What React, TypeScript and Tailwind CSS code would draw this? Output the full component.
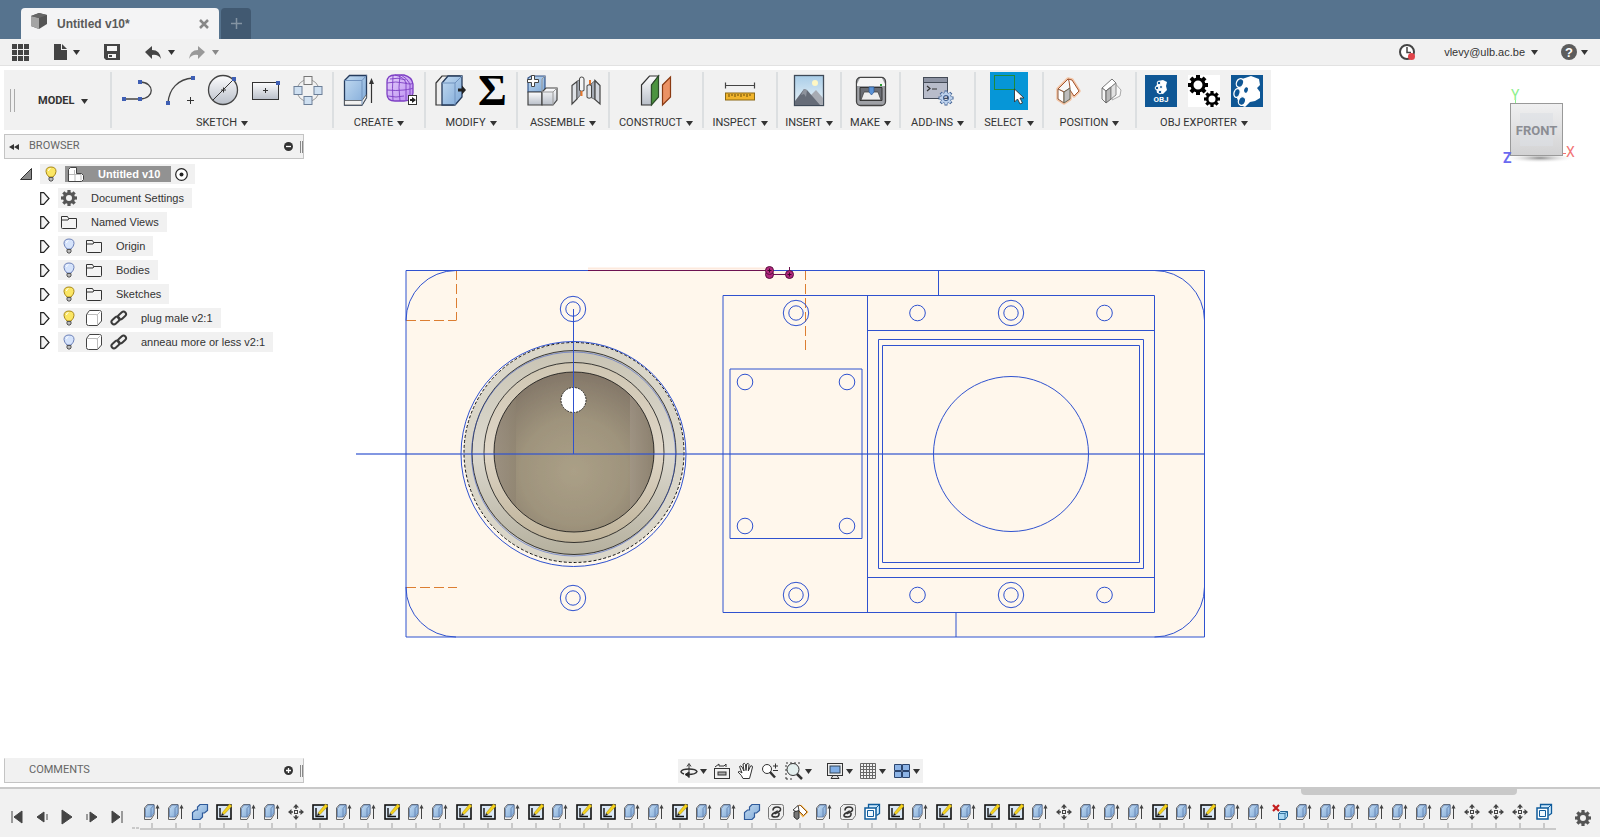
import type { ReactNode } from "react";

const Caret = ({ className = "text-[#333]" }: { className?: string }) => (
  <svg width="7" height="5" viewBox="0 0 7 5" className={`shrink-0 ${className}`} aria-hidden="true">
    <path d="M0 0h7L3.5 5z" fill="currentColor" />
  </svg>
);

const Gear = ({ cx, cy, r, hole, teeth = 8, fill }: { cx: number; cy: number; r: number; hole: number; teeth?: number; fill: string }) => (
  <g>
    {Array.from({ length: teeth }, (_, i) => (
      <rect
        key={i}
        x={cx - r * 0.2}
        y={cy - r}
        width={r * 0.4}
        height={r * 0.5}
        fill={fill}
        transform={`rotate(${(360 / teeth) * i} ${cx} ${cy})`}
      />
    ))}
    <circle cx={cx} cy={cy} r={(r * 0.76 + hole) / 2} fill="none" stroke={fill} strokeWidth={r * 0.76 - hole} />
  </g>
);

const Gradients = () => (
  <svg width="0" height="0" className="absolute" aria-hidden="true">
    <defs>
      <linearGradient id="blue" x1="0" y1="0" x2="1" y2="1">
        <stop offset="0" stopColor="#c3dbf1" />
        <stop offset="1" stopColor="#7fa9d8" />
      </linearGradient>
      <linearGradient id="grey" x1="0" y1="0" x2="0" y2="1">
        <stop offset="0" stopColor="#fdfdfe" />
        <stop offset="1" stopColor="#b9bfc9" />
      </linearGradient>
      <linearGradient id="purple" x1="0" y1="0" x2="1" y2="1">
        <stop offset="0" stopColor="#e6d3fb" />
        <stop offset="1" stopColor="#b98af0" />
      </linearGradient>
      <linearGradient id="sky" x1="0" y1="0" x2="0" y2="1">
        <stop offset="0" stopColor="#a9cde8" />
        <stop offset="1" stopColor="#eaf3f8" />
      </linearGradient>
      <linearGradient id="cubeFace" x1="0" y1="0" x2="0" y2="1">
        <stop offset="0" stopColor="#f0f0f1" />
        <stop offset="1" stopColor="#d2d2d3" />
      </linearGradient>
      <radialGradient id="cubeShadow">
        <stop offset="0" stopColor="#8d8d8d" />
        <stop offset="1" stopColor="#fff" stopOpacity="0" />
      </radialGradient>
    </defs>
  </svg>
);

/* ---------- toolbar icons, 38 x 38 ---------- */

const Dot = ({ x, y }: { x: number; y: number }) => <rect x={x - 2} y={y - 2} width="4" height="4" fill="#3f5fb4" />;

const toolIcons: Record<string, ReactNode> = {
  Line: (
    <>
      <path d="M7 27h16c15 0 15-17 0-17" fill="none" stroke="#444" strokeWidth="1.3" />
      <Dot x={7} y={27} />
      <Dot x={23} y={27} />
      <Dot x={23} y={10} />
    </>
  ),
  Arc: (
    <>
      <path d="M8 31C9 17 18 7 33 6" fill="none" stroke="#444" strokeWidth="1.3" />
      <path d="M27 28.500h7M30.500 25v7" stroke="#333" />
      <Dot x={8} y={31} />
      <Dot x={33} y={6} />
    </>
  ),
  Circle: (
    <>
      <circle cx="20" cy="18" r="14.500" fill="url(#grey)" stroke="#444" strokeWidth="1.300" />
      <path d="M10 28L31 7M18 18h5M20.500 15.500v5" stroke="#333" />
      <Dot x={31} y={7} />
    </>
  ),
  Rectangle: (
    <>
      <rect x="6.500" y="10.500" width="26" height="17" fill="url(#grey)" stroke="#333" />
      <path d="M17 18.500h5M19.500 16v5" stroke="#333" />
      <Dot x={32} y={11} />
    </>
  ),
  Pattern: (
    <>
      <circle cx="19" cy="18.500" r="11" fill="none" stroke="#999" />
      <rect x="15" y="4.500" width="8" height="8" fill="#f4f4f4" stroke="#777" />
      <rect x="5" y="14.500" width="8" height="8" fill="#cfe0f1" stroke="#6c7f98" />
      <rect x="25" y="14.500" width="8" height="8" fill="#cfe0f1" stroke="#6c7f98" />
      <rect x="15" y="24.500" width="8" height="8" fill="#cfe0f1" stroke="#6c7f98" />
    </>
  ),
  Extrude: (
    <>
      <path d="M5.500 8.500l5-5h17v22l-4.500 7.500h-17.500z" fill="url(#blue)" stroke="#253b5c" strokeWidth="1.300" />
      <path d="M5.500 28.500v4.500h17.500l4.500-7.500v-3l-4.500 6z" fill="#f1f1f1" stroke="#444" strokeWidth="0.700" />
      <path d="M5.500 8.500h17.500l4.500-5M23 8.500v24" fill="none" stroke="#7193bf" />
      <path d="M32.500 31V10" stroke="#333" strokeWidth="1.200" />
      <path d="M30 12l2.500-6 2.500 6z" fill="#333" />
    </>
  ),
  Form: (
    <>
      <path d="M5 10q0-7 8-7h9q8 2 9 9v9q-1 8-9 8h-9q-8 0-8-7z" fill="url(#purple)" stroke="#7d3fc4" strokeWidth="1.300" />
      <path d="M5 11q9-2 17 0t9 0M5 18q9 1 17 0t9-2M6 24q8 2 16 0M11 4q-1 12 0 25M18 3q-2 12 0 26M24 10v18M13 3q9 2 11 8M19 3q6 3 9 9v12M8 7q8-2 16 1" fill="none" stroke="#7d3fc4" strokeWidth="0.900" />
      <rect x="26.500" y="23.500" width="8" height="9" fill="#fff" stroke="#333" />
      <path d="M28 27h2v-2l4 3-4 3v-2h-2z" fill="#222" />
    </>
  ),
  "Press Pull": (
    <>
      <path d="M5 11l6-7h17l-6 7v22H5z" fill="#eee" stroke="#333" strokeWidth="1.200" />
      <path d="M11 11l6-7h14v21l-7 8H11z" fill="url(#blue)" stroke="#253b5c" strokeWidth="1.300" />
      <path d="M11 11h13v22M24 11l7-7" fill="none" stroke="#7193bf" />
      <path d="M27 16.500h4v-3l4 4.500-4 4.500v-3h-4z" fill="#222" />
    </>
  ),
  "New Component": (
    <>
      <path d="M5 6l3-2h14v14l-3 2H5z" fill="url(#blue)" stroke="#34558a" strokeWidth="1.200" />
      <path d="M5 20h14v13H5z" fill="url(#grey)" stroke="#444" strokeWidth="1.200" />
      <path d="M19 20l4-4h11v12l-4 5H19z" fill="url(#grey)" stroke="#444" strokeWidth="1.200" />
      <path d="M19 20h11v13M30 20l4-4M19 7v13M19 7l3-3" fill="none" stroke="#999" />
      <path d="M8.500 3.500h3v4h4v3h-4v4h-3v-4h-4v-3h4z" fill="#fff" stroke="#444" />
    </>
  ),
  Joint: (
    <>
      <path d="M6 13.500l5-4v17.500l-5 5z" fill="#dfe2e7" stroke="#444" strokeWidth="1.200" />
      <path d="M11 9.500l4-3v16l-4 4.500z" fill="#a5abb5" stroke="#555" strokeWidth="0.800" />
      <path d="M13.500 7q0-2 2.200-2t2.300 2v11.500q-2.200 1.500-4.500 0z" fill="#f4f4f4" stroke="#444" />
      <path d="M15.500 19v5M24 8v5" stroke="#e6762c" strokeWidth="2" />
      <path d="M25 12l4-3.500v19l-4-2z" fill="#a5abb5" stroke="#555" strokeWidth="0.800" />
      <path d="M29 8.500l5 5V32l-5-4.500z" fill="#d3d7de" stroke="#444" strokeWidth="1.200" />
      <path d="M21 13.500q2-1.500 4.500 0v12q-2.500 1.500-4.500 0z" fill="#e4e7ec" stroke="#444" />
    </>
  ),
  Plane: (
    <>
      <path d="M4.500 13l8-9h9l-7 9v20h-10z" fill="url(#grey)" stroke="#333" strokeWidth="1.200" />
      <path d="M14.500 13l7-9v21l-7 8z" fill="#4c9440" stroke="#2d4d2a" strokeWidth="1.200" />
      <path d="M25.500 13l8-8v20l-8 8z" fill="#eb9265" stroke="#8a3a12" strokeWidth="1.200" />
    </>
  ),
  Measure: (
    <>
      <path d="M5 13.500h28M4.500 10.500v6M33.500 10.500v6" stroke="#444" strokeWidth="1.200" />
      <rect x="4.500" y="21" width="29" height="7" fill="#f0b42c" stroke="#8b6914" />
      <path d="M8 22v3M11 22v2M14 22v3M17 22v2M20 22v3M23 22v2M26 22v3M29 22v2" stroke="#6b4c08" />
    </>
  ),
  "Insert Image": (
    <>
      <rect x="4.500" y="3.500" width="29" height="30" fill="url(#sky)" stroke="#3f4a58" strokeWidth="1.300" />
      <circle cx="25" cy="11" r="3" fill="#fff7c4" />
      <path d="M14 30l12-12 7 8v7H14z" fill="#a7abb3" />
      <path d="M5 29l9-12 3 1 13 15H5z" fill="#666c78" />
      <path d="M14 17l-3 6 3-1 2 3 1-7z" fill="#8d929c" />
    </>
  ),
  "3D Print": (
    <>
      <rect x="4.500" y="5.500" width="29" height="28" rx="4" fill="#9fa1a6" stroke="#444" strokeWidth="1.300" />
      <path d="M5 12l3-6h22l3 6v2H5z" fill="#f4f4f4" />
      <path d="M8 15.500h22v13H8z" fill="#6b6e75" stroke="#333" />
      <path d="M12 20h14l3 8H9z" fill="#eee" stroke="#444" strokeWidth="0.800" />
      <path d="M17 15h5v5l-2.500 3-2.500-3z" fill="#5a93d8" stroke="#2d568f" strokeWidth="0.700" />
      <rect x="28" y="12" width="2" height="2" fill="#2d9c35" />
    </>
  ),
  Scripts: (
    <>
      <rect x="4.500" y="5.500" width="24" height="21" fill="#b8bcca" stroke="#444b57" />
      <path d="M5 6h23v4H5z" fill="#8d93a3" />
      <path d="M5 10.500h23" stroke="#444b57" />
      <path d="M8 14l3 2.500L8 19M13 17h5" fill="none" stroke="#333" strokeWidth="1.200" />
      <Gear cx={27} cy={26} r={7.5} hole={2} fill="#3f5f91" />
      <Gear cx={27} cy={26} r={6.5} hole={3} fill="#bcd1ec" />
    </>
  ),
  Select: (
    <>
      <path d="M0 0h38v38H0z" fill="#0696d7" />
      <rect x="4.500" y="3.500" width="20" height="14" fill="none" stroke="#1f8a3a" />
      <path d="M24.500 17v13l3-3 2.500 5 2.500-1-2.500-5h4z" fill="#fff" stroke="#333" strokeWidth="0.900" />
    </>
  ),
  "Capture Position": (
    <>
      <path d="M9 17l10-10 4 1 7 11-5 5-4-6v9l-6 4-6-4z" fill="#fff" stroke="#f3c4a4" strokeWidth="3.500" strokeLinejoin="round" />
      <path d="M19 7l4 1 7 11-5 5-6-9z" fill="#fff" stroke="#a0542f" />
      <path d="M9 17l10-10 1 2 1 7-6 4z" fill="#f6f6f6" stroke="#a0542f" />
      <path d="M9 17l6 3v11l-6-4z" fill="#fff" stroke="#8a5a40" />
      <path d="M15 20l6-4v11l-6 4z" fill="#bdbdbd" stroke="#665" />
    </>
  ),
  "Revert Position": (
    <>
      <path d="M20 8l9 10-1 6-8 4z" fill="#f9f9f9" stroke="#aaa" />
      <path d="M10 16l10-9 4 4-10 8z" fill="#fff" stroke="#777" />
      <path d="M10 16l4 3v12l-4-4z" fill="#f4f4f4" stroke="#777" />
      <path d="M14 19l5-4v12l-5 4z" fill="#b9b9b9" stroke="#666" />
      <path d="M19 15l5-4v12l-5 4z" fill="#e2e2e2" stroke="#888" />
    </>
  ),
  "Export OBJ": (
    <>
      <path d="M3 3h32v32H3z" fill="#0f5795" />
      <path d="M16 9l5-1 4 2-1 4 1 4-4 4-6-1-1-6z" fill="#fff" />
      <g fill="#0f5795" stroke="#fff">
        <circle cx="17" cy="11" r="1.800" />
        <circle cx="15" cy="16" r="1.800" />
        <circle cx="19" cy="15" r="1.500" />
        <circle cx="18" cy="20" r="1.800" />
      </g>
      <text x="19" y="30" fill="#fff" fontSize="8" fontWeight="700" textAnchor="middle">
        OBJ
      </text>
    </>
  ),
  "Export Settings": (
    <>
      <path d="M3 3h32v32H3z" fill="#fff" />
      <Gear cx={13} cy={13} r={10} hole={4.5} fill="#000" />
      <Gear cx={27} cy={27} r={8} hole={3.5} fill="#000" />
    </>
  ),
  "Export Body": (
    <>
      <path d="M3 3h32v32H3z" fill="#0f5795" />
      <path d="M14 7l9-3 8 3 1 6-3 3 3 4 0 6-5 3-5 1-5 5-5-2-4-9 2-9z" fill="#fff" />
      <g fill="#0f5795" stroke="#fff" strokeWidth="1.300">
        <ellipse cx="12" cy="11" rx="3.500" ry="4.500" transform="rotate(25 12 11)" />
        <ellipse cx="9" cy="21" rx="3" ry="4.500" transform="rotate(15 9 21)" />
        <ellipse cx="18" cy="18" rx="2.500" ry="3.500" transform="rotate(20 18 18)" />
        <ellipse cx="14" cy="29" rx="3.500" ry="4.500" transform="rotate(20 14 29)" />
      </g>
    </>
  ),
};

const groups = [
  { label: "SKETCH", width: "w-[222px]", tools: ["Line", "Arc", "Circle", "Rectangle", "Pattern"] },
  { label: "CREATE", width: "w-[92px]", tools: ["Extrude", "Form"] },
  { label: "MODIFY", width: "w-[92px]", tools: ["Press Pull", "Parameters"] },
  { label: "ASSEMBLE", width: "w-[92px]", tools: ["New Component", "Joint"] },
  { label: "CONSTRUCT", width: "w-[94px]", tools: ["Plane"] },
  { label: "INSPECT", width: "w-[74px]", tools: ["Measure"] },
  { label: "INSERT", width: "w-[64px]", tools: ["Insert Image"] },
  { label: "MAKE", width: "w-[59px]", tools: ["3D Print"] },
  { label: "ADD-INS", width: "w-[75px]", tools: ["Scripts"] },
  { label: "SELECT", width: "w-[68px]", tools: ["Select"] },
  { label: "POSITION", width: "w-[93px]", tools: ["Capture Position", "Revert Position"] },
  { label: "OBJ EXPORTER", width: "w-[134px]", tools: ["Export OBJ", "Export Settings", "Export Body"] },
];

const Toolbar = () => (
  <div className="ml-1 mt-1 flex h-[60px] w-fit bg-[#f1f1f1] font-['Roboto','Liberation_Sans',sans-serif] text-[#333]">
    <div className="my-[2px] flex w-[108px] items-center border-r-2 border-[#dcdfe1]">
      <span className="ml-[6px] h-[23px] w-[5px] border-x border-[#aaa]" />
      <button className="ml-[23px] flex items-center gap-[6px] pt-[2px] text-[11px] font-bold">
        MODEL <Caret />
      </button>
    </div>
    {groups.map((g, i) => (
      <div
        key={g.label}
        className={`my-[2px] flex flex-col items-center ${g.width} ${i < groups.length - 1 ? "border-r-2 border-[#dcdfe1]" : ""}`}
      >
        <div className="flex gap-[5px]">
          {g.tools.map((t) => (
            <button key={t} aria-label={t} className="size-[38px]">
              {t === "Parameters" ? (
                <span className="block font-['Liberation_Serif',serif] text-[44px] font-bold leading-[38px] text-black">Σ</span>
              ) : (
                <svg width="38" height="38" viewBox="0 0 38 38" aria-hidden="true">
                  {toolIcons[t]}
                </svg>
              )}
            </button>
          ))}
        </div>
        <button className="mt-[5px] flex items-center gap-1 whitespace-nowrap text-[11px] leading-4">
          {g.label} <Caret />
        </button>
      </div>
    ))}
  </div>
);

/* ---------- top bars ---------- */

const TabBar = () => (
  <header className="flex h-[39px] items-end gap-[2px] bg-[#56738e] pl-[21px]">
    <div className="flex h-[31px] w-[198px] items-center rounded-t bg-[#f4f4f5] px-[10px]">
      <svg width="16" height="17" viewBox="0 0 16 17" className="-mt-1" aria-hidden="true">
        <path d="M0 3l8-3 8 2v9l-8 5-8-3z" fill="#555" />
        <path d="M0 3l8 2v11l-8-3z" fill="#a4a4a4" />
        <path d="M0 3l8-3 8 2-8 3z" fill="#666" />
      </svg>
      <span className="ml-[10px] grow text-xs font-bold text-[#5a5a5a]">Untitled v10*</span>
      <button aria-label="Close tab">
        <svg width="10" height="10" viewBox="0 0 10 10">
          <path d="M1 1l8 8M9 1L1 9" stroke="#888" strokeWidth="2.500" />
        </svg>
      </button>
    </div>
    <button aria-label="New tab" className="flex h-[31px] w-[30px] items-center justify-center rounded-t bg-[#415971]">
      <svg width="11" height="11" viewBox="0 0 11 11">
        <path d="M0 5.500h11M5.500 0v11" stroke="#8494a3" strokeWidth="1.500" />
      </svg>
    </button>
  </header>
);

const undoPath = "M0 6l7-6v4q8 0 9 9-3-5-9-4v4z";

const QuickBar = () => (
  <div className="flex h-[27px] items-center border-b border-[#e2e2e2] bg-[#f1f1f1] px-3 text-[#444]">
    <button aria-label="Data panel">
      <svg width="17" height="17" viewBox="0 0 17 17" fill="#444">
        {[0, 6, 12].map((y) => [0, 6, 12].map((x) => <rect key={`${x}-${y}`} x={x} y={y} width="5" height="5" />))}
      </svg>
    </button>
    <button aria-label="File" className="ml-[25px] flex items-center gap-[6px]">
      <svg width="13" height="16" viewBox="0 0 13 16" fill="#444">
        <path d="M0 0h7v6h6v10H0z" />
        <path d="M8 0l5 5H8z" />
      </svg>
      <Caret />
    </button>
    <button aria-label="Save" className="ml-[24px]">
      <svg width="16" height="16" viewBox="0 0 16 16">
        <path d="M0 0h16v16H2l-2-2z" fill="#444" />
        <path d="M3 2h10v5H3zM4 10h8v4H4z" fill="#f4f4f4" />
        <path d="M5 11h3v2H5z" fill="#444" />
      </svg>
    </button>
    <button aria-label="Undo" className="ml-[25px] flex items-center gap-[7px]">
      <svg width="16" height="13" viewBox="0 0 16 13">
        <path d={undoPath} fill="#444" />
      </svg>
      <Caret />
    </button>
    <button aria-label="Redo" className="ml-[14px] flex items-center gap-[7px]" disabled>
      <svg width="16" height="13" viewBox="0 0 16 13">
        <path d={undoPath} fill="#999" transform="matrix(-1 0 0 1 16 0)" />
      </svg>
      <Caret className="text-[#888]" />
    </button>
    <button aria-label="Job status" className="ml-auto">
      <svg width="17" height="17" viewBox="0 0 17 17">
        <circle cx="8" cy="8" r="7" fill="#fff" stroke="#444" strokeWidth="2" />
        <path d="M8 3v5.500h4" fill="none" stroke="#444" strokeWidth="1.500" />
        <circle cx="12.500" cy="12.500" r="3.500" fill="#e0444a" />
      </svg>
    </button>
    <button className="ml-[28px] flex items-center gap-[6px] text-[11px] text-[#333]">
      vlevy@ulb.ac.be <Caret />
    </button>
    <button aria-label="Help" className="ml-[23px] flex items-center gap-[4px]">
      <span className="flex size-4 items-center justify-center rounded-full bg-[#5c5c5c] text-[13px] font-bold leading-none text-white">?</span>
      <Caret />
    </button>
  </div>
);

/* ---------- browser ---------- */

const Bulb = ({ on }: { on?: boolean }) => (
  <svg width="12" height="16" viewBox="0 0 12 16" className="shrink-0" aria-hidden="true">
    <path
      d="M4 11Q1 8 1 5.500Q1 1 6 1t5 4.500Q11 8 8 11z"
      fill={on ? "#fbe664" : "#d5e3fb"}
      stroke={on ? "#a88717" : "#6c80b8"}
    />
    <path d="M4 11.500h4v2.500l-1 1H5l-1-1z" fill="#bbb" stroke="#555" />
    <path d="M3.500 5q0-2 2-2.500" fill="none" stroke="#fff" />
  </svg>
);

const Folder = () => (
  <svg width="16" height="14" viewBox="0 0 16 14" className="shrink-0" aria-hidden="true">
    <path d="M.5 12.500v-11h6l1 2h8v9q0 1-1 1h-13q-1 0-1-1z" fill="#f4f4f4" stroke="#333" />
    <path d="M1 5h6l1-1.500" fill="none" stroke="#333" />
  </svg>
);

const Body = () => (
  <svg width="16" height="16" viewBox="0 0 16 16" className="shrink-0" aria-hidden="true">
    <path d="M.5 4.500l3-4h10q2 0 2 2v8.500l-4 4.500h-9q-2 0-2-2z" fill="#fff" stroke="#444" />
    <path d="M1 4.500h9q1.500 0 1.500 1.500v9M11 5l4-4" fill="none" stroke="#bbb" />
  </svg>
);

const Link = () => (
  <svg width="18" height="16" viewBox="0 0 18 16" className="shrink-0" fill="none" stroke="#3a3a3a" strokeWidth="2" aria-hidden="true">
    <rect x="1" y="8" width="9" height="5" rx="2.500" transform="rotate(-42 5.500 10.500)" />
    <rect x="7.500" y="3" width="9" height="5" rx="2.500" transform="rotate(-42 12 5.500)" />
  </svg>
);

type Item = { label: string; bulb?: "on" | "off"; icon: "gear" | "folder" | "body"; linked?: boolean };

const items: Item[] = [
  { label: "Document Settings", icon: "gear" },
  { label: "Named Views", icon: "folder" },
  { label: "Origin", bulb: "off", icon: "folder" },
  { label: "Bodies", bulb: "off", icon: "folder" },
  { label: "Sketches", bulb: "on", icon: "folder" },
  { label: "plug male v2:1", bulb: "on", icon: "body", linked: true },
  { label: "anneau more or less v2:1", bulb: "off", icon: "body", linked: true },
];

const PanelHeader = ({ title, open }: { title: string; open?: boolean }) => (
  <div
    className={`flex h-[25px] w-[300px] items-center border border-[#c4c4c4] bg-[#f1f1f1] pl-1 font-['Roboto','Liberation_Sans',sans-serif] text-[11px] text-[#666] ${open ? "" : "border-t-[#f1f1f1]"}`}
  >
    <span className="w-5">
      {open && (
        <svg width="10" height="6" viewBox="0 0 10 6" fill="#333" aria-hidden="true">
          <path d="M5 0v6L0 3zM10 0v6L5 3z" />
        </svg>
      )}
    </span>
    <span className="grow">{title}</span>
    <button aria-label={open ? "Collapse" : "Expand"}>
      <svg width="9" height="9" viewBox="0 0 9 9">
        <circle cx="4.500" cy="4.500" r="4.500" fill="#333" />
        <path d={open ? "M2 4.500h5" : "M2 4.500h5M4.500 2v5"} stroke="#fff" strokeWidth="1.300" />
      </svg>
    </button>
    <span className="ml-[7px] h-3 w-[3px] border-x border-[#888]" />
  </div>
);

const Browser = () => (
  <aside className="ml-1 mt-1 w-[300px]">
    <PanelHeader title="BROWSER" open />
    <ul className="mt-[5px] flex flex-col gap-1 text-[11px] text-[#333]">
      <li className="flex h-5 items-center pl-4">
        <button aria-label="Collapse Untitled v10" className="w-5">
          <svg width="12" height="12" viewBox="0 0 12 12">
            <path d="M11.500.5v11H.5z" fill="#8a8a8a" stroke="#333" />
          </svg>
        </button>
        <div className="flex h-5 items-center bg-[#f1f1f1] pl-[5px] pr-[7px]">
          <Bulb on />
          <span className="ml-[8px] flex h-4 w-[106px] items-center bg-[#929292] pl-[3px] font-bold text-white">
            <svg width="16" height="15" viewBox="0 0 16 15" aria-hidden="true">
              <path d="M.5 2.500l2-2h6v6h5l2 2v4l-2 2H.5z" fill="#fff" stroke="#444" />
              <path d="M7 14V7.500H1M7 7.500h6v6M6.500 7V3" fill="none" stroke="#bbb" />
            </svg>
            <span className="ml-[14px]">Untitled v10</span>
          </span>
          <svg width="13" height="13" viewBox="0 0 13 13" className="ml-1" aria-hidden="true">
            <circle cx="6.500" cy="6.500" r="5.800" fill="#fff" stroke="#222" strokeWidth="1.200" />
            <circle cx="6.500" cy="6.500" r="2" fill="#222" />
          </svg>
        </div>
      </li>
      {items.map((item) => (
        <li key={item.label} className="flex h-5 items-center pl-9">
          <button aria-label={`Expand ${item.label}`} className="w-[18px]">
            <svg width="10" height="13" viewBox="0 0 10 13">
              <path d="M.7.700h3l5.300 5.800-5.300 5.800h-3z" fill="#f4f4f4" stroke="#222" strokeWidth="1.200" />
            </svg>
          </button>
          <div className="flex h-5 items-center bg-[#f1f1f1] pr-[8px]">
            {item.bulb && (
              <span className="ml-[5px] w-[20px]">
                <Bulb on={item.bulb === "on"} />
              </span>
            )}
            <span className="ml-[3px]">
              {item.icon === "gear" && (
                <svg width="16" height="16" viewBox="0 0 16 16" aria-hidden="true">
                  <Gear cx={8} cy={8} r={8} hole={3} fill="#555" />
                </svg>
              )}
              {item.icon === "folder" && <Folder />}
              {item.icon === "body" && <Body />}
            </span>
            {item.linked && (
              <span className="ml-[8px] w-[17px]">
                <Link />
              </span>
            )}
            <span className="ml-[14px]">{item.label}</span>
          </div>
        </li>
      ))}
    </ul>
  </aside>
);

/* ---------- canvas ---------- */

const BLUE = "#2f52cf";

const Ring = ({ cx, cy }: { cx: number; cy: number }) => (
  <>
    <circle cx={cx} cy={cy} r="12.700" />
    <circle cx={cx} cy={cy} r="7.200" />
  </>
);

const Drawing = () => (
  <svg className="absolute inset-0 size-full" viewBox="0 66 1600 721" aria-label="Front view of the model">
    <defs>
      <radialGradient id="well" cx="0.5" cy="0.62" r="0.6">
        <stop offset="0" stopColor="#aba087" />
        <stop offset="0.55" stopColor="#9f947d" />
        <stop offset="1" stopColor="#85796a" />
      </radialGradient>
      <linearGradient id="bevel" x1="0" y1="0" x2="0" y2="1">
        <stop offset="0" stopColor="#c9c4b4" />
        <stop offset="0.5" stopColor="#dcd9cf" />
        <stop offset="1" stopColor="#b5b09e" />
      </linearGradient>
      <linearGradient id="lip" x1="0" y1="0" x2="0" y2="1">
        <stop offset="0" stopColor="#cfc6b2" />
        <stop offset="0.5" stopColor="#dfd6c7" />
        <stop offset="1" stopColor="#beb298" />
      </linearGradient>
      <linearGradient id="side" x1="0" y1="0" x2="1" y2="0">
        <stop offset="0" stopColor="#a3988a" />
        <stop offset="1" stopColor="#8d8270" />
      </linearGradient>
      <clipPath id="wellClip">
        <circle cx="574" cy="452" r="80" />
      </clipPath>
    </defs>
    <path d="M406 270.500h798.500V637H406z" fill="#fff7ec" />

    <circle cx="574" cy="452.500" r="110" fill="#dad6c9" />
    <circle cx="574" cy="452.500" r="102" fill="url(#bevel)" />
    <circle cx="574" cy="452.500" r="90" fill="url(#lip)" />
    <circle cx="574" cy="452" r="80" fill="url(#well)" />
    <g clipPath="url(#wellClip)" opacity="0.6">
      <path d="M494 370h22v165h-22z" fill="url(#side)" />
      <path d="M630 370h25v165h-25z" fill="url(#side)" />
    </g>
    <circle cx="573.500" cy="400" r="12.500" fill="#fff" />
    <g fill="none" stroke="#111">
      <circle cx="574" cy="452.500" r="110" strokeDasharray="3 2" />
      <circle cx="574" cy="452.500" r="102" strokeWidth="0.800" />
      <circle cx="574" cy="452.500" r="90" strokeWidth="0.800" />
      <circle cx="574" cy="452" r="80" strokeWidth="0.800" />
      <circle cx="573.500" cy="400" r="12.500" strokeWidth="0.800" strokeDasharray="2 1" />
    </g>

    <g fill="none" stroke="#dc7e32" strokeDasharray="10 4">
      <path d="M406 320.500h50.500M456.500 270v50M406 587.500h51M805.500 270v80" />
    </g>

    <g fill="none" stroke={BLUE}>
      <path d="M406 270.500h798.500v366.500h-798.500z" />
      <path d="M406 320.500a50 50 0 0 1 50-50M1154.500 270.500a50 50 0 0 1 50 50M406 587a50 50 0 0 0 50 50M1154.500 637a50 50 0 0 0 50-50" />
      <circle cx="573.500" cy="454" r="112.500" />
      <circle cx="573.500" cy="454" r="102" strokeOpacity="0.5" />
      <path d="M573.500 309v145" />
      <path d="M356 454h848.500" strokeWidth="2" strokeOpacity="0.6" />
      <path d="M723 295.500h431.500v317h-431.500zM867.500 295.500v317M867.500 330.500h287M867.500 577.500h287" />
      <path d="M878.500 339.500h265v229h-265zM882.500 345.500h257v217h-257z" />
      <path d="M730 369h132v169.500H730z" />
      <path d="M938.500 270.500v25M956 612.500v24.500" />
      <circle cx="1011" cy="454" r="77.500" />
      <Ring cx={573} cy={309} />
      <Ring cx={573} cy={598} />
      {[313, 595].map((cy) => (
        <g key={cy}>
          <Ring cx={796} cy={cy} />
          <Ring cx={1011} cy={cy} />
          <circle cx="917.500" cy={cy} r="7.800" />
          <circle cx="1104.500" cy={cy} r="7.800" />
        </g>
      ))}
      {[382, 526].map((cy) => (
        <g key={cy}>
          <circle cx="745" cy={cy} r="7.800" />
          <circle cx="847" cy={cy} r="7.800" />
        </g>
      ))}
    </g>

    <path d="M588 268.500h180" stroke="#fdeadd" strokeWidth="2" />
    <path d="M588 270.500h182M770 274.500h20M789.500 267v7" fill="none" stroke="#6d1250" />
    <g fill="#b3287f" stroke="#5a0f3f">
      <circle cx="769.500" cy="274.500" r="4" />
      <circle cx="769.500" cy="270.500" r="4" />
      <circle cx="789.500" cy="274.500" r="4" />
    </g>
    <path d="M767.500 270.500h4M769.500 268.500v4M787.500 274.500h4M789.500 272.500v4" stroke="#3c0829" />
  </svg>
);

const ViewCube = () => (
  <svg width="84" height="84" viewBox="0 0 84 84" className="mr-4 mt-[-46px] shrink-0 font-['Roboto','Liberation_Sans',sans-serif]" aria-label="View cube">
    <ellipse cx="40" cy="74" rx="36" ry="5" fill="url(#cubeShadow)" />
    <text x="11" y="16" fontSize="14" fill="#8df08d">
      Y
    </text>
    <path d="M15.500 16v4" stroke="#8df08d" />
    <rect x="10.500" y="19.500" width="52" height="52" fill="url(#cubeFace)" stroke="#999" />
    <rect x="20" y="29" width="33" height="33" fill="#dcdfe4" opacity="0.6" />
    <text x="36.500" y="51" fontSize="13" fontWeight="700" fill="#8b8d93" textAnchor="middle">
      FRONT
    </text>
    <path d="M63 69.500h3" stroke="#f27474" />
    <text x="66" y="73" fontSize="14" fill="#f27474">
      X
    </text>
    <text x="3" y="79" fontSize="14" fontWeight="700" fill="#6a6af0">
      Z
    </text>
  </svg>
);

/* ---------- navigation bar ---------- */

const NavButton = ({ label, menu, children }: { label: string; menu?: boolean; children: ReactNode }) => (
  <button aria-label={label} className="flex items-center gap-[2px]">
    <svg width="18" height="18" viewBox="0 0 18 18" fill="none" stroke="#333">
      {children}
    </svg>
    {menu && <Caret />}
  </button>
);

const NavBar = () => (
  <div className="flex h-6 w-[245px] items-center justify-between bg-[#f1f1f1] pl-[2px] pr-[3px]">
    <NavButton label="Orbit" menu>
      <path d="M4 12q-3-1-3-2.500 1-2.500 8-2.500t8 2.500q-1 3-9 3" strokeWidth="1.400" />
      <path d="M9 3v13M7 4.500L9 1.500l2 3" />
      <path d="M9 10l-4 2.500L9 15z" fill="#222" />
    </NavButton>
    <NavButton label="Look at">
      <rect x="1.500" y="6.500" width="15" height="10" />
      <rect x="5" y="10" width="8" height="3" fill="#aaa" />
      <path d="M2 5l4-3v2h5l2-2v3" />
    </NavButton>
    <NavButton label="Pan">
      <path
        d="M6 16.500q-1-3-5-6.500 1.500-1.500 4 1L2.500 4.500q1.500-1.500 2.500.5l2 4-1-7q1.500-1.500 2.500.5l.5 6 .7-6.500q1.800-1.500 2.300.5L11.300 9l2.200-5q1.800-1 2 1L14 11l-1.500 5.500z"
        fill="#fff"
      />
    </NavButton>
    <NavButton label="Zoom">
      <circle cx="6" cy="7" r="4.500" fill="#fff" />
      <path d="M9 10l5 5.500" strokeWidth="2.500" />
      <path d="M12 4h5M14.500 1.500v5M12 8.500h5" />
    </NavButton>
    <NavButton label="Fit" menu>
      <path d="M1 17V1h16M1 17h7" strokeDasharray="2 2" />
      <circle cx="8" cy="7.500" r="6" fill="#e4efee" />
      <path d="M12 12l5 5" strokeWidth="2.500" />
    </NavButton>
    <span className="w-[2px]" />
    <NavButton label="Display settings" menu>
      <rect x="1.500" y="1.500" width="15" height="12" fill="#eee" />
      <rect x="4" y="4" width="10" height="7" fill="#80aee6" stroke="#345" />
      <path d="M5 16.500h8l-2-3H7z" fill="#ddd" />
    </NavButton>
    <NavButton label="Grid and snaps" menu>
      <path d="M1.500 1.500h15v15h-15zM4.500 1v16M7.500 1v16M10.500 1v16M13.500 1v16M1 4.500h16M1 7.500h16M1 10.500h16M1 13.500h16" stroke="#666" />
    </NavButton>
    <NavButton label="Viewports" menu>
      <path d="M1.500 2.500h7v6h-7zM9.500 2.500h7v6h-7zM1.500 9.500h7v6h-7zM9.500 9.500h7v6h-7z" fill="#8db4e6" stroke="#2b456e" />
    </NavButton>
  </div>
);

/* ---------- timeline ---------- */

const featureIcons: Record<string, ReactNode> = {
  E: (
    <>
      <path d="M.5 4l3-3.500h6.500v10l-3 5H.5z" fill="#eee" stroke="#666" />
      <path d="M1.500 4.500L4 1h6v8l-3 4H1.500z" fill="url(#blue)" stroke="#5d7cab" strokeWidth="0.800" />
      <path d="M7 4.500V13M7 4.500L10 1" fill="none" stroke="#5d7cab" strokeWidth="0.800" />
      <path d="M13.500 15V3" stroke="#444" />
      <path d="M11.500 4.500l2-4 2 4z" fill="#444" />
    </>
  ),
  J: <path d="M.5 14V8.500l3-2.500h2V3l2.500-2.500h7.500v6l-3 2.500h-2v4l-2.500 2.500H.5z" fill="url(#blue)" stroke="#2f5a9a" strokeWidth="1.200" />,
  S: (
    <>
      <rect x="1" y="1" width="14" height="14" fill="#dbe8f5" stroke="#111" strokeWidth="1.600" />
      <path d="M4 4v8.500h8" fill="none" stroke="#111" strokeWidth="1.400" />
      <path d="M6 9l7.500-9 2.500 2-8 8.500z" fill="#f5d21c" stroke="#a58a14" strokeWidth="0.500" />
      <path d="M5 12l1-3 2 2z" fill="#222" />
    </>
  ),
  M: (
    <>
      <rect x="6.500" y="6.500" width="3" height="3" fill="none" stroke="#444" />
      <path d="M8 0l3 3.500H5zM8 16l-3-3.500h6zM0 8l3.500-3v6zM16 8l-3.500 3V5z" fill="#444" />
      <path d="M8 3v2M8 11v2M3 8h2M11 8h2" stroke="#444" strokeWidth="1.500" />
    </>
  ),
  L: (
    <>
      <path d="M.5 3.500l3-3h10q2 0 2 2v9l-3 4H2.500q-2 0-2-2z" fill="#eee" stroke="#777" />
      <g fill="none" stroke="#333" strokeWidth="1.600">
        <path d="M5 6.500q0-3.500 4-3.500t3.500 3q-.5 1.500-3 2.500t-3 1.500" />
        <path d="M11 9q.5 4-3.500 4T4 11q.5-1.500 3-2.500T9.500 6.500" />
      </g>
    </>
  ),
  P: (
    <>
      <path d="M8 2l6 6-3 3-4-5" fill="#fff" stroke="#f6b64a" strokeWidth="3.500" />
      <path d="M6 2l2-1 7 7-3.500 3.500L6 6z" fill="#fff" stroke="#8f5417" />
      <path d="M1 6l5-4.500 1 5-2 1.500z" fill="#fff" stroke="#444" />
      <path d="M2 8l5-1.500v7.500L5 15.500 2 13z" fill="#777" stroke="#333" />
    </>
  ),
  B: (
    <>
      <path d="M4.500 4V.5h11v9l-3 2" fill="#cfeafd" stroke="#0f5c9c" strokeWidth="1.300" />
      <rect x="1" y="4" width="11" height="11" fill="#fff" stroke="#0f5c9c" strokeWidth="1.500" />
      <path d="M3.500 6.500h6v6h-6z" fill="#eef7fe" stroke="#0f5c9c" />
      <path d="M12 4l3-3" stroke="#0f5c9c" />
    </>
  ),
  X: (
    <>
      <path d="M1 1l6 6M7 1L1 7" stroke="#c31d1d" strokeWidth="2.200" />
      <path d="M6.500 9.500l2-2h7v5l-2.500 3H6.500z" fill="#a9d8f5" stroke="#1d5f91" />
      <path d="M6.500 9.500H13v6M13 9.500l2.500-2" fill="none" stroke="#1d5f91" strokeWidth="0.800" />
    </>
  ),
};

const features = "EEJSEEMSEESEESSESESSEESEEJLPELBSESESSEMEEESESEEXEEEEEEEMMMB".split("");

const playback = [
  { label: "Go to start", d: "M3 2v12M13 2v12L5 8z" },
  { label: "Step back", d: "M10 3v10L3 8zM13 5v6" },
  { label: "Play", d: "M3 1v14l10-7z" },
  { label: "Step forward", d: "M6 3v10l7-5zM3 5v6" },
  { label: "Go to end", d: "M3 2v12l8-6zM13 2v12" },
];

const Timeline = () => (
  <footer className="flex h-[50px] border-t-2 border-[#c9c9c9] bg-[#f1f1f1]">
    <div className="flex items-center gap-[9px] pl-[9px] pt-[8px]">
      {playback.map((p) => (
        <button key={p.label} aria-label={p.label}>
          <svg width="16" height="16" viewBox="0 0 16 16">
            <path d={p.d} fill="#444" stroke="#444" />
          </svg>
        </button>
      ))}
    </div>
    <div className="ml-[7px] flex">
      <span className="mr-[1px] mt-auto mb-[8px] h-[2px] w-[3px] bg-[#c9c9c9]" />
      <span className="mr-[1px] mt-auto mb-[8px] h-[2px] w-[3px] bg-[#c9c9c9]" />
      <div className="flex flex-col">
        <div className="flex h-[7px] justify-end pr-[39px]">
          <span className="h-[6px] w-[216px] rounded-b bg-[#c9c9c9]" />
        </div>
        <div className="mt-[8px] flex border-b-2 border-[#c9c9c9]">
          {features.map((f, i) => (
            <button key={i} aria-label={`Feature ${i + 1}`} className="flex w-6 flex-col items-center">
              <svg width="16" height="16" viewBox="0 0 16 16" className="overflow-visible">
                {featureIcons[f]}
              </svg>
              <span className="mt-[3px] h-[5px] w-[2px] bg-[#c9c9c9]" />
            </button>
          ))}
        </div>
      </div>
    </div>
    <button aria-label="Timeline settings" className="ml-auto mr-[9px] mt-[10px]">
      <svg width="16" height="16" viewBox="0 0 16 16">
        <Gear cx={8} cy={8} r={8} hole={3} fill="#555" />
      </svg>
    </button>
  </footer>
);

export default function App() {
  return (
    <div className="flex h-screen flex-col overflow-hidden bg-white font-['Liberation_Sans',Arial,sans-serif]">
      <Gradients />
      <TabBar />
      <QuickBar />
      <main className="relative flex grow flex-col">
        <Drawing />
        <div className="relative flex grow flex-col">
          <Toolbar />
          <div className="flex grow items-start justify-between">
            <Browser />
            <ViewCube />
          </div>
          <div className="mb-1 flex items-end">
            <div className="ml-1 flex-1">
              <PanelHeader title="COMMENTS" />
            </div>
            <NavBar />
            <div className="mr-1 flex-1" />
          </div>
        </div>
      </main>
      <Timeline />
    </div>
  );
}
